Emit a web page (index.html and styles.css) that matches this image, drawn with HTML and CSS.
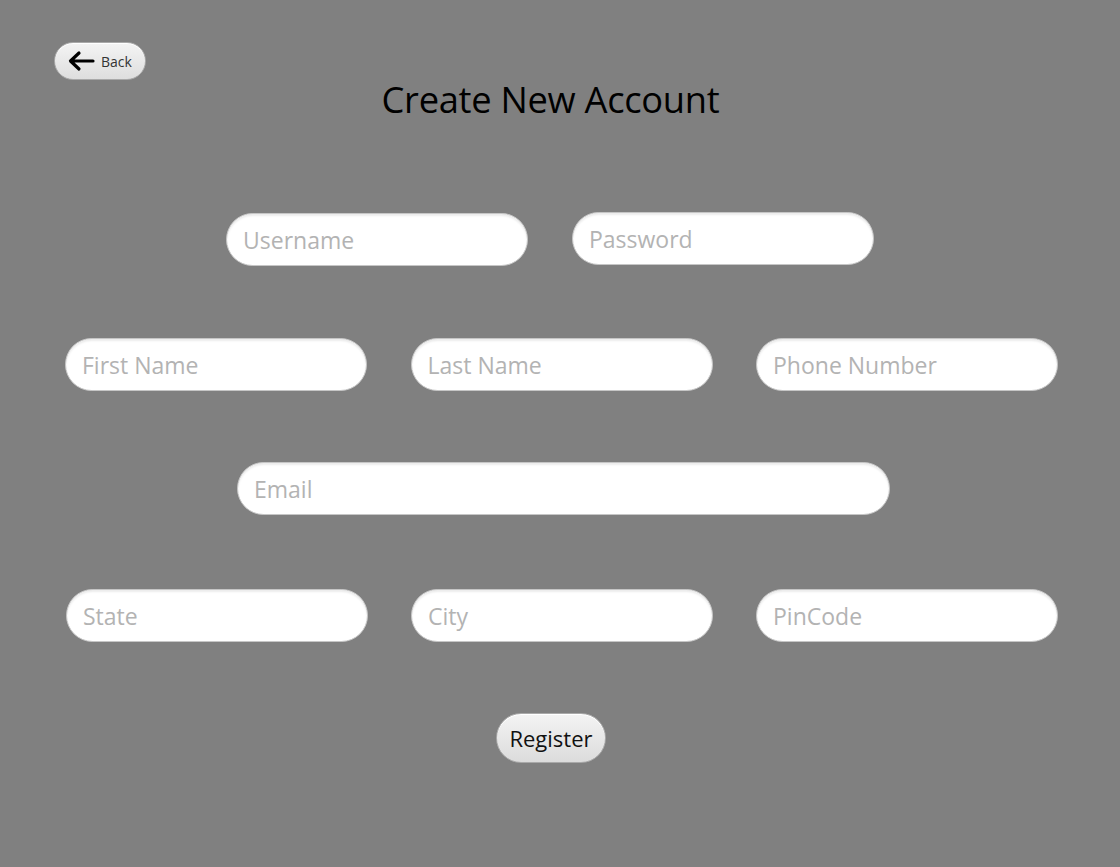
FILE: index.html
```html
<!DOCTYPE html>
<html>
<head>
<meta charset="utf-8">
<link rel="stylesheet" href="styles.css">
</head>
<body>
<div class="page">
  <div class="top">
    <button class="back-btn">
      <svg class="back-icon" width="28" height="22" viewBox="0 0 28 22">
        <path d="M26 11H4 M12 3L3.5 11L12 19" fill="none" stroke="#000" stroke-width="3.2" stroke-linecap="round" stroke-linejoin="round"/>
      </svg>
      <span>Back</span>
    </button>
  </div>
  <h1 class="title">Create New Account</h1>
  <form class="form">
    <div class="row row-1">
      <input class="field" placeholder="Username">
      <input class="field field-up" placeholder="Password">
    </div>
    <div class="row row-2">
      <input class="field" placeholder="First Name">
      <input class="field" placeholder="Last Name">
      <input class="field" placeholder="Phone Number">
    </div>
    <div class="row row-3">
      <input class="field field-wide" placeholder="Email">
    </div>
    <div class="row row-4">
      <input class="field" placeholder="State">
      <input class="field" placeholder="City">
      <input class="field" placeholder="PinCode">
    </div>
    <div class="row row-5">
      <button type="button" class="register-btn">Register</button>
    </div>
  </form>
</div>
</body>
</html>
```
FILE: styles.css
```css
html, body {
  margin: 0;
  padding: 0;
  background: #808080;
  width: 1120px;
  height: 867px;
  overflow: hidden;
  font-family: "Open Sans", "Noto Sans", sans-serif;
}
.page {
  padding-top: 42px;
}
.top {
  padding-left: 54px;
  height: 38px;
}
.back-btn {
  display: flex;
  align-items: center;
  gap: 6px;
  width: 92px;
  height: 38px;
  padding: 0 0 0 12px;
  border: 1px solid #a9a9a9;
  border-radius: 19px;
  background: linear-gradient(#f4f4f4, #dedede);
  box-shadow: inset 0 1px 0 #ffffff;
  font-family: "Open Sans", sans-serif;
  font-size: 14px;
  color: #333;
  cursor: pointer;
}
.back-icon {
  flex: none;
}
.title {
  margin: -7px 0 0 0;
  padding-right: 19px;
  text-align: center;
  font-weight: 400;
  font-size: 36.3px;
  line-height: 52px;
  color: #000;
  letter-spacing: -0.3px;
}
.form {
  margin: 0;
}
.row {
  display: flex;
  align-items: flex-start;
}
.field {
  box-sizing: border-box;
  width: 302px;
  height: 53px;
  padding: 0 16px;
  border: 1px solid #c6c6c6;
  border-radius: 27px;
  background: #fff;
  box-shadow: inset 0 2px 2px rgba(0,0,0,0.08);
  font-family: "Open Sans", "Noto Sans", sans-serif;
  font-size: 23px;
  color: #222;
  outline: none;
}
.field::placeholder {
  color: #b3b3b3;
}
.field-wide {
  width: 653px;
}
.row-1 {
  margin-top: 88px;
  padding-left: 226px;
  gap: 44px;
}
.field-up {
  margin-top: -1px;
}
.row-2 {
  margin-top: 72px;
  padding-left: 65px;
  gap: 43.5px;
}
.row-3 {
  margin-top: 71px;
  padding-left: 237px;
}
.row-4 {
  margin-top: 74px;
  padding-left: 66px;
  gap: 43px;
}
.row-5 {
  margin-top: 71px;
  padding-left: 496px;
}
.register-btn {
  box-sizing: border-box;
  width: 110px;
  height: 50px;
  border: 1px solid #a9a9a9;
  border-radius: 25px;
  background: linear-gradient(#f4f4f4, #dcdcdc);
  box-shadow: inset 0 1px 0 #fff;
  font-family: "Open Sans", sans-serif;
  font-size: 22px;
  color: #111;
  padding: 0;
  cursor: pointer;
}
```
